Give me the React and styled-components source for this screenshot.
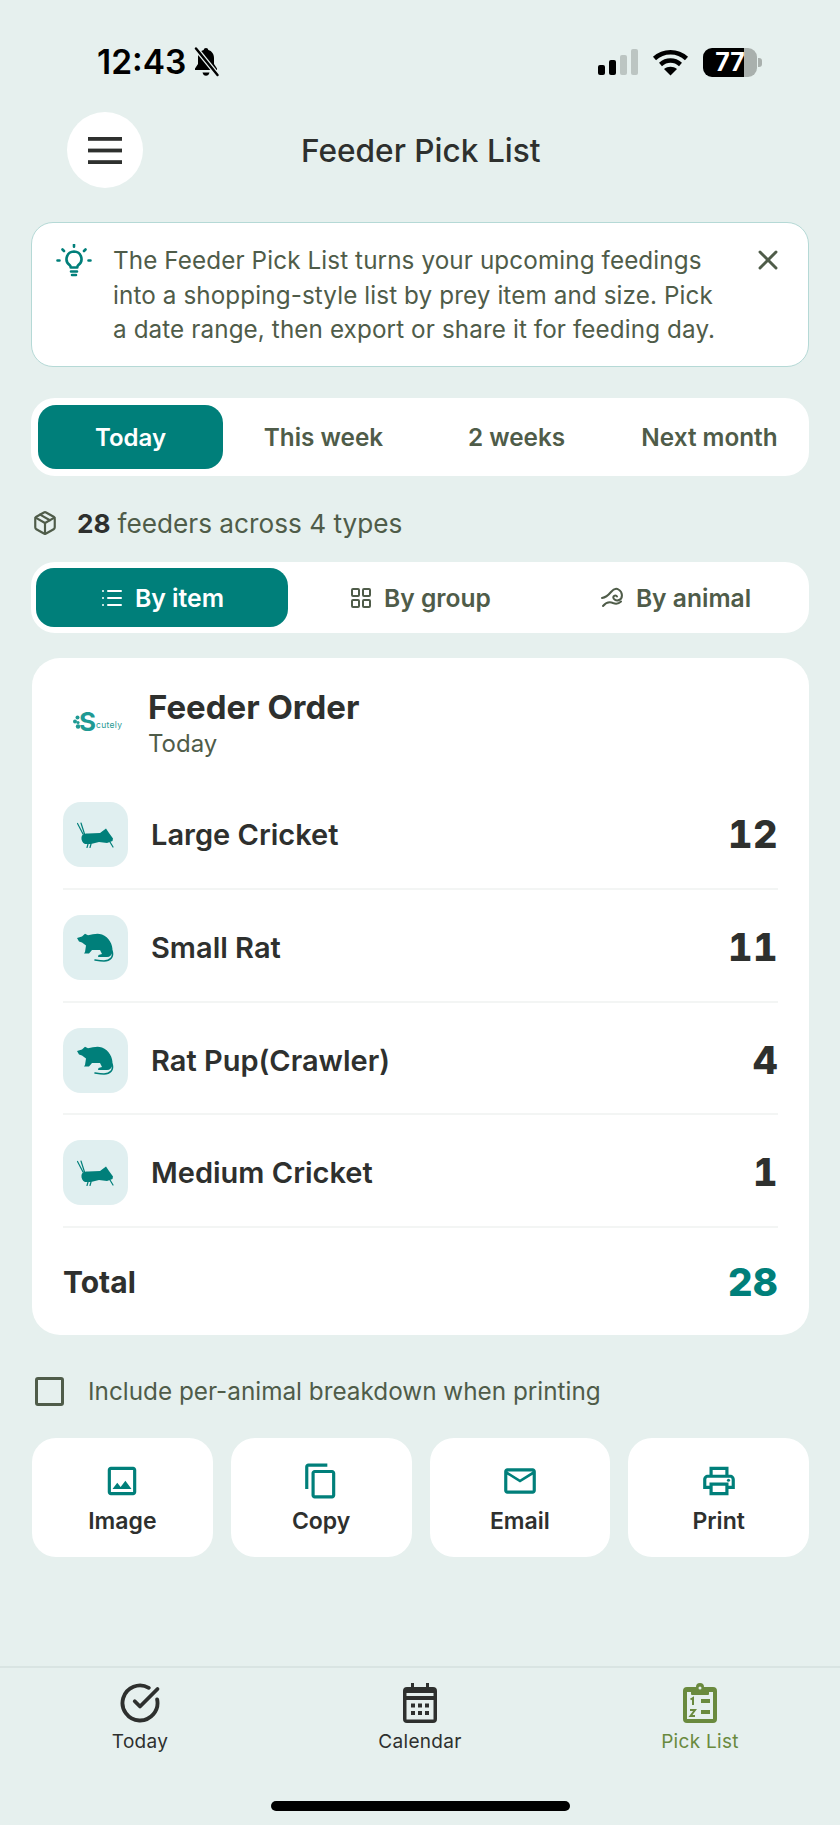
import React from 'react';
import styled, { createGlobalStyle } from 'styled-components';
import { X, Package, List, LayoutGrid, CircleCheckBig } from 'lucide-react';
import { MdOutlineImage, MdContentCopy, MdMailOutline, MdOutlinePrint } from 'react-icons/md';

const TEAL = '#007f7a';
const INK = '#2e302e';
const OLIVE = '#4f5c49';

const GlobalStyle = createGlobalStyle`
  html, body { margin: 0; padding: 0; background: #e6f0ee; }
  body { font-family: Inter, "Liberation Sans", sans-serif; color: ${INK}; }
  * { box-sizing: border-box; }
`;

const Page = styled.div`
  width: 840px;
  height: 1825px;
  display: flex;
  flex-direction: column;
  overflow: hidden;
  background: #e6f0ee;
`;

const StatusBar = styled.div`
  height: 112px;
  padding: 42px 83px 0 97px;
  display: flex;
  justify-content: space-between;
  align-items: flex-start;
`;

const Clock = styled.div`
  display: flex;
  align-items: center;
  gap: 6px;
  color: #000;
  font-size: 33.5px;
  font-weight: 600;
  line-height: 40px;
`;

const StatusIcons = styled.div`
  display: flex;
  align-items: center;
  gap: 14px;
  height: 40px;
`;

const Header = styled.header`
  height: 76px;
  padding-left: 67px;
  display: flex;
  align-items: center;
`;

const RoundButton = styled.div`
  width: 76px;
  height: 76px;
  border-radius: 50%;
  background: #fff;
  display: flex;
  align-items: center;
  justify-content: center;
`;

const Title = styled.h1`
  margin: 0 0 0 158px;
  font-size: 31.6px;
  font-weight: 500;
  color: ${INK};
`;

const Content = styled.main`
  flex: 1;
  padding: 34px 31px 0;
  display: flex;
  flex-direction: column;
`;

const Banner = styled.div`
  height: 145px;
  border: 1.5px solid #b5d9d6;
  border-radius: 22px;
  background: #fff;
  padding: 21px 24px 0 24px;
  display: flex;
  align-items: flex-start;
`;

const BannerText = styled.p`
  margin: 0 0 0 21px;
  width: 606px;
  font-size: 24.25px;
  line-height: 34.5px;
  color: ${OLIVE};
  letter-spacing: 0.1px;
`;

const BannerClose = styled.div`
  margin-left: auto;
  display: flex;
`;

const Segments = styled.div`
  margin-top: ${p => p.$top}px;
  height: ${p => p.$height}px;
  padding: ${p => p.$pad};
  background: #fff;
  border-radius: 24px;
  display: flex;
`;

const Segment = styled.div`
  flex: ${p => p.$wide ? '0 0 auto' : '1 1 0'};
  width: ${p => p.$width}px;
  margin-right: ${p => p.$wide ? 4 : 0}px;
  display: flex;
  align-items: center;
  justify-content: center;
  gap: 11px;
  border-radius: 18px;
  font-size: ${p => p.$size}px;
  font-weight: 600;
  color: ${p => p.$active ? '#fff' : OLIVE};
  background: ${p => p.$active ? TEAL : 'transparent'};
`;

const Summary = styled.div`
  margin-top: 30px;
  padding-left: 1px;
  height: 34px;
  display: flex;
  align-items: center;
  font-size: 26.2px;
  color: ${OLIVE};
`;

const SummaryCount = styled.strong`
  margin: 0 7px 0 19px;
  font-weight: 700;
  color: ${INK};
`;

const Card = styled.section`
  margin: 25px 0 0 1px;
  height: 677px;
  background: #fff;
  border-radius: 28px;
  padding: 0 31px;
`;

const CardHead = styled.div`
  height: 119px;
  padding-top: 29px;
  display: flex;
  align-items: flex-start;
`;

const Logo = styled.div`
  width: 85px;
  height: 62px;
  display: flex;
  align-items: center;
  padding: 8px 0 0 10px;
  color: #1f9a94;
`;

const LogoBig = styled.span`
  font-size: 26px;
  line-height: 1;
  font-weight: 700;
  margin-left: -1px;
`;

const LogoSmall = styled.span`
  font-size: 8.500px;
  letter-spacing: 0.3px;
  margin-top: 6px;
`;

const CardTitle = styled.div`
  font-size: 33px;
  font-weight: 700;
  line-height: 40px;
  color: ${INK};
`;

const CardSub = styled.div`
  font-size: 24px;
  line-height: 33px;
  color: ${OLIVE};
`;

const Row = styled.div`
  height: 112.8px;
  padding-top: 25px;
  display: flex;
  align-items: flex-start;
  border-bottom: 2px solid #f3f5f4;
`;

const Tile = styled.div`
  width: 65px;
  height: 65px;
  border-radius: 18px;
  background: #e0eff0;
  display: flex;
  align-items: center;
  justify-content: center;
`;

const RowName = styled.div`
  flex: 1;
  margin-left: 23px;
  height: 65px;
  line-height: 65px;
  font-size: 29px;
  font-weight: 600;
  color: ${INK};
`;

const RowQty = styled.div`
  height: 65px;
  line-height: 65px;
  font-size: 38px;
  font-weight: 800;
  letter-spacing: 0.5px;
  font-feature-settings: "tnum";
  color: ${INK};
`;

const TotalRow = styled.div`
  height: 107px;
  display: flex;
  align-items: center;
  justify-content: space-between;
`;

const TotalLabel = styled.div`
  font-size: 30px;
  font-weight: 700;
  color: ${INK};
`;

const TotalValue = styled.div`
  font-size: 38.5px;
  font-weight: 800;
  color: ${TEAL};
`;

const CheckRow = styled.label`
  margin-top: 41px;
  height: 30px;
  display: flex;
  align-items: center;
  font-size: 24.3px;
  color: ${OLIVE};
`;

const CheckBox = styled.span`
  width: 29px;
  height: 29px;
  margin: 0 24px 0 4px;
  border: 3px solid ${OLIVE};
  border-radius: 3px;
`;

const Actions = styled.div`
  margin-top: 32px;
  display: grid;
  grid-template-columns: repeat(4, 1fr);
  gap: 18px;
  padding-left: 1px;
`;

const ActionButton = styled.div`
  height: 119px;
  border-radius: 24px;
  background: #fff;
  display: flex;
  flex-direction: column;
  align-items: center;
  padding-top: 24px;
  gap: 7px;
  font-size: 23px;
  font-weight: 600;
  color: ${INK};
  svg { color: ${TEAL}; display: block; }
`;

const TabBar = styled.nav`
  height: 159px;
  border-top: 2px solid #d9e4e2;
  display: grid;
  grid-template-columns: repeat(3, 1fr);
  position: relative;
`;

const Tab = styled.div`
  display: flex;
  flex-direction: column;
  align-items: center;
  padding-top: 14px;
  font-size: 19px;
  color: ${p => p.$active ? '#6a8a3e' : INK};
  letter-spacing: 0.3px;
`;

const TabIcon = styled.div`
  height: 42px;
  display: flex;
  align-items: center;
  justify-content: center;
  svg { display: block; }
`;

const TabLabel = styled.span`
  margin-top: 6px;
  line-height: 24px;
`;

const HomeBar = styled.div`
  position: absolute;
  left: 271px;
  top: 133px;
  width: 299px;
  height: 10px;
  border-radius: 5px;
  background: #000;
`;

const BatteryWrap = styled.div`
  position: relative;
  width: 54px;
  height: 29px;
  border-radius: 9px;
  background: linear-gradient(90deg, #000 0 76%, #a9b0ad 76% 100%);
  color: #fff;
  font-size: 25px;
  font-weight: 700;
  line-height: 29px;
  text-align: center;
  &::after {
    content: '';
    position: absolute;
    right: -5px;
    top: 10px;
    width: 4px;
    height: 9px;
    border-radius: 0 3px 3px 0;
    background: #a9b0ad;
  }
`;

const Bell = () => (
  <svg width="28" height="30" viewBox="0 0 28 30">
    <path d="M14 1c1.400 0 2.200.9 2.300 2 3.600 1 5.700 4 5.700 8v6l3 4.500v1.500H3v-1.500L6 17v-6c0-4 2.100-7 5.700-8C11.800 1.900 12.600 1 14 1z" fill="#000" />
    <path d="M10.500 25.500h7c-.4 2-1.800 3.300-3.500 3.300s-3.100-1.300-3.500-3.300z" fill="#000" />
    <path d="M4 1.500 25.500 28" stroke="#e6f0ee" strokeWidth="5" />
    <path d="M4 1.500 25.500 28" stroke="#000" strokeWidth="2.400" strokeLinecap="round" />
  </svg>
);

const Signal = () => (
  <svg width="40" height="26" viewBox="0 0 40 26">
    <rect x="0" y="16" width="7" height="10" rx="2" fill="#000" />
    <rect x="11" y="11" width="7" height="15" rx="2" fill="#000" />
    <rect x="22" y="6" width="7" height="20" rx="2" fill="#bcc5c2" />
    <rect x="33" y="0" width="7" height="26" rx="2" fill="#bcc5c2" />
  </svg>
);

const Wifi = () => (
  <svg width="37" height="27" viewBox="0 0 37 27">
    <path d="M2.500 9.500C11.500 1.200 25.500 1.200 34.500 9.500" fill="none" stroke="#000" strokeWidth="4.500" />
    <path d="M8.500 15.500C14.500 10.300 22.500 10.300 28.500 15.500" fill="none" stroke="#000" strokeWidth="4.500" />
    <path d="M18.500 26.500 12 20c3.800-3 9.200-3 13 0z" fill="#000" />
  </svg>
);

const Hamburger = () => (
  <svg width="34" height="27" viewBox="0 0 34 27" fill={INK}>
    <rect y="0" width="34" height="3.800" />
    <rect y="11.600" width="34" height="3.800" />
    <rect y="23.200" width="34" height="3.800" />
  </svg>
);

const Bulb = () => (
  <svg width="36" height="36" viewBox="0 0 36 36" fill="none" stroke={TEAL} strokeWidth="2.600" strokeLinecap="round" strokeLinejoin="round">
    <path d="M18 7.500a7.500 7.500 0 0 0-4.300 13.600c.8.600 1 1.300 1 2.400h6.600c0-1.100.2-1.800 1-2.400A7.500 7.500 0 0 0 18 7.500z" />
    <path d="M15 27.500h6M16 31h4" />
    <path d="M18 .8v2M6.500 5.500 8 7M29.500 5.500 28 7M1.500 16.500h2M32.500 16.500h2" />
  </svg>
);

const LogoBlobs = () => (
  <svg width="7" height="14" viewBox="0 0 7 14" fill="#1f9a94">
    <circle cx="4.500" cy="2.500" r="2" />
    <circle cx="2" cy="6.500" r="2" />
    <circle cx="5" cy="7.500" r="1.600" />
    <circle cx="5" cy="11.500" r="2.200" />
  </svg>
);

const Rat = () => (
  <svg width="38" height="29" viewBox="0 0 38 29" fill={TEAL}>
    <path d="M0 5 5 3.500 8 .7l3 1.500C16 1.500 20 0 25 1.500 32 4 36 12 35.500 18c-.5 4-2.500 6-5.500 6h-9l.5-2 3.500-1-2-4h-8l-3 3.500H7L8 19l1-6.500-4-3-3-1z" />
    <path d="M35 18c2 6-2 10-8 10-3 0-6-.5-9-1" fill="none" stroke={TEAL} strokeWidth="1.600" strokeLinecap="round" />
  </svg>
);

const Cricket = () => (
  <svg width="37" height="26" viewBox="0 0 37 26" fill={TEAL}>
    <path d="M4.500 15C5 12 8 11 11 11.500L23 11l6-4.500 3 4.500 4 5.500-.5 2.500-5.500 2-8-1-8 2H8c-2.500-1-4-4-3.500-7z" />
    <path d="M6 12 .5 1.500M7.500 12 4 1M11 22l-1 3.500M14 22l-1 3.500M33 20l3 5" fill="none" stroke={TEAL} strokeWidth="1.200" strokeLinecap="round" />
  </svg>
);

const SnakeGlyph = () => (
  <svg width="24" height="24" viewBox="0 0 24 24" fill="none" stroke={OLIVE} strokeWidth="2" strokeLinecap="round" strokeLinejoin="round">
    <path d="M1 12c4-.5 6.500-3 9-6 2-2.500 5-4 7.500-2.500 4.500 2.500 4.500 9 .5 10.500-3 1.300-6.500-1-5.500-3.500.7-1.500 3-1.500 3.500 0" />
    <path d="M2 20c3-3.500 6.500-4.500 10-3 3 1.200 6 .5 8-1.500" />
  </svg>
);

const CalendarIcon = () => (
  <svg width="36" height="40" viewBox="0 0 36 40">
    <path d="M9 0h3v4h12V0h3v4h4a4 4 0 0 1 4 4v28a4 4 0 0 1-4 4H5a4 4 0 0 1-4-4V8a4 4 0 0 1 4-4h4z" fill={INK} />
    <rect x="4.500" y="10" width="27" height="3" fill="#e6f0ee" />
    <rect x="4.500" y="17" width="27" height="19.500" fill="#e6f0ee" />
    {[9, 16, 23].map(x => [20.500, 28].map(y => <rect key={`${x}-${y}`} x={x} y={y} width="4" height="4" fill={INK} />))}
  </svg>
);

const ClipboardIcon = () => (
  <svg width="36" height="40" viewBox="0 0 36 40">
    <path d="M18 0a4 4 0 0 1 4 4h9a4 4 0 0 1 4 4v28a4 4 0 0 1-4 4H5a4 4 0 0 1-4-4V8a4 4 0 0 1 4-4h9a4 4 0 0 1 4-4z" fill="#6a8a3e" />
    <rect x="5" y="9" width="26" height="27" fill="#e6f0ee" />
    <rect x="9" y="4" width="18" height="8" rx="1" fill="#6a8a3e" />
    <circle cx="18" cy="5" r="1.500" fill="#e6f0ee" />
    <rect x="19" y="16" width="9" height="4" fill="#6a8a3e" />
    <rect x="19" y="27" width="9" height="4" fill="#6a8a3e" />
    <path d="M8.500 16.500 11 15v7M8 27h5l-4.500 6H13" fill="none" stroke="#6a8a3e" strokeWidth="2" />
  </svg>
);

const ROWS = [
  { name: 'Large Cricket', qty: 12, icon: <Cricket /> },
  { name: 'Small Rat', qty: 11, icon: <Rat /> },
  { name: 'Rat Pup(Crawler)', qty: 4, icon: <Rat /> },
  { name: 'Medium Cricket', qty: 1, icon: <Cricket /> },
];

const ACTIONS = [
  { label: 'Image', Icon: MdOutlineImage },
  { label: 'Copy', Icon: MdContentCopy },
  { label: 'Email', Icon: MdMailOutline },
  { label: 'Print', Icon: MdOutlinePrint },
];

export default function App() {
  return (
    <Page>
      <GlobalStyle />
      <StatusBar>
        <Clock>12:43 <Bell /></Clock>
        <StatusIcons>
          <Signal />
          <Wifi />
          <BatteryWrap>77</BatteryWrap>
        </StatusIcons>
      </StatusBar>

      <Header>
        <RoundButton><Hamburger /></RoundButton>
        <Title>Feeder Pick List</Title>
      </Header>

      <Content>
        <Banner>
          <Bulb />
          <BannerText>
            The Feeder Pick List turns your upcoming feedings into a shopping-style list by prey item and size. Pick a date range, then export or share it for feeding day.
          </BannerText>
          <BannerClose><X size={32} color={OLIVE} strokeWidth={2.200} /></BannerClose>
        </Banner>

        <Segments $top={31} $height={78} $pad="7px 3px 7px 7px">
          <Segment $wide $width={185} $active $size={24}>Today</Segment>
          <Segment $size={24.300}>This week</Segment>
          <Segment $size={24.300}>2 weeks</Segment>
          <Segment $size={24.300}>Next month</Segment>
        </Segments>

        <Summary>
          <Package size={26} color={OLIVE} strokeWidth={2} />
          <SummaryCount>28</SummaryCount> feeders across 4 types
        </Summary>

        <Segments $top={22} $height={71} $pad="6px 5px">
          <Segment $wide $width={252} $active $size={24.800}><List size={24} />By item</Segment>
          <Segment $size={24.600}><LayoutGrid size={24} />By group</Segment>
          <Segment $size={24.600}><SnakeGlyph />By animal</Segment>
        </Segments>

        <Card>
          <CardHead>
            <Logo><LogoBlobs /><LogoBig>S</LogoBig><LogoSmall>cutely</LogoSmall></Logo>
            <div>
              <CardTitle>Feeder Order</CardTitle>
              <CardSub>Today</CardSub>
            </div>
          </CardHead>
          {ROWS.map(r => (
            <Row key={r.name}>
              <Tile>{r.icon}</Tile>
              <RowName>{r.name}</RowName>
              <RowQty>{r.qty}</RowQty>
            </Row>
          ))}
          <TotalRow>
            <TotalLabel>Total</TotalLabel>
            <TotalValue>28</TotalValue>
          </TotalRow>
        </Card>

        <CheckRow>
          <CheckBox />
          Include per-animal breakdown when printing
        </CheckRow>

        <Actions>
          {ACTIONS.map(({ label, Icon }) => (
            <ActionButton key={label}>
              <Icon size={38} />
              {label}
            </ActionButton>
          ))}
        </Actions>
      </Content>

      <TabBar>
        <Tab><TabIcon><CircleCheckBig size={42} strokeWidth={2.200} color={INK} /></TabIcon><TabLabel>Today</TabLabel></Tab>
        <Tab><TabIcon><CalendarIcon /></TabIcon><TabLabel>Calendar</TabLabel></Tab>
        <Tab $active><TabIcon><ClipboardIcon /></TabIcon><TabLabel>Pick List</TabLabel></Tab>
        <HomeBar />
      </TabBar>
    </Page>
  );
}
